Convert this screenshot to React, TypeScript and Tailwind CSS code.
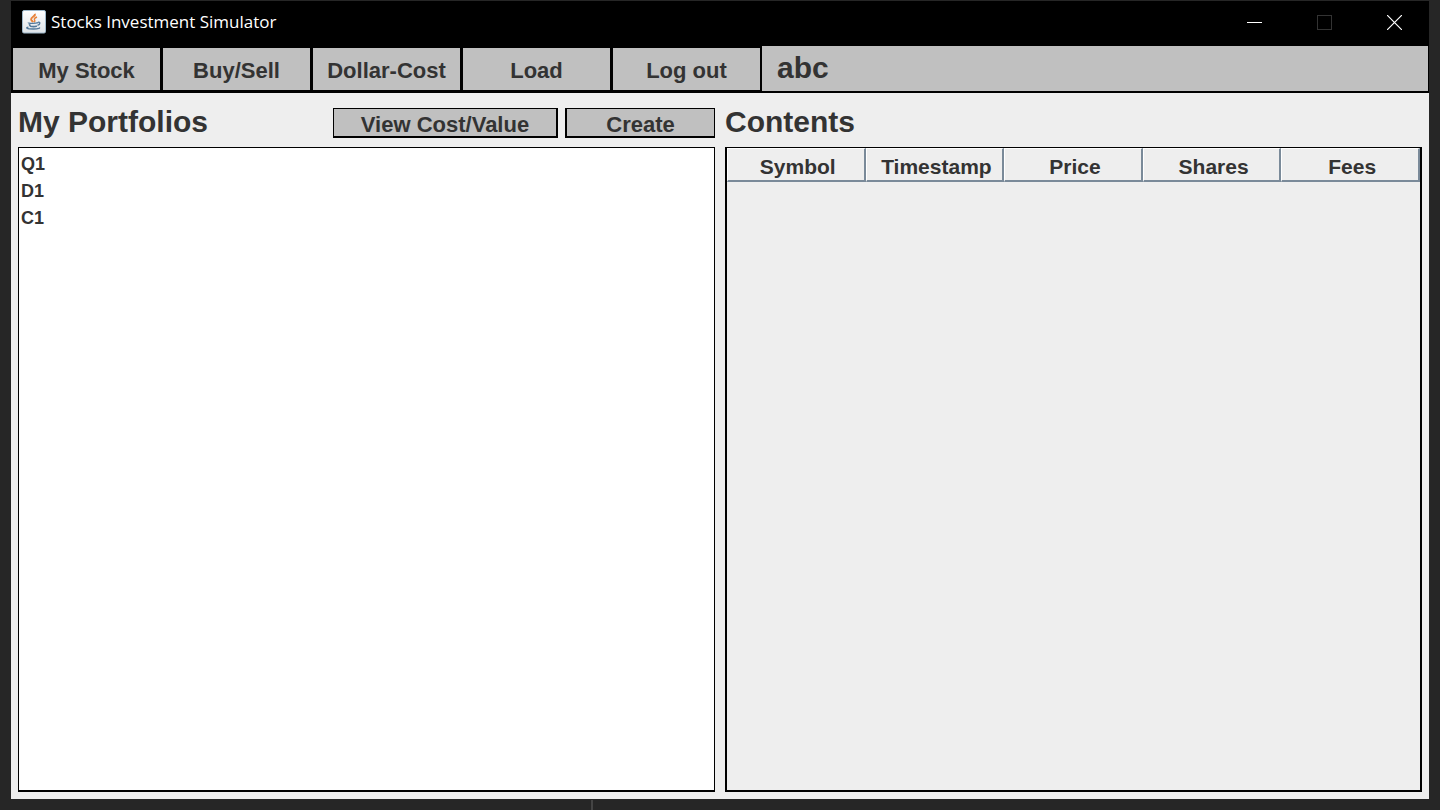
import React from "react";

const NAV_ITEMS = ["My Stock", "Buy/Sell", "Dollar-Cost", "Load", "Log out"];
const PORTFOLIOS = ["Q1", "D1", "C1"];
const COLUMNS = ["Symbol", "Timestamp", "Price", "Shares", "Fees"];

function JavaIcon() {
  return (
    <svg width="24" height="24" viewBox="0 0 24 24" aria-hidden="true">
      <defs>
        <linearGradient id="tile" x1="0" y1="0" x2="0" y2="1">
          <stop offset="0" stopColor="#ffffff" />
          <stop offset="1" stopColor="#dde2e7" />
        </linearGradient>
      </defs>
      <rect x="0.5" y="0.5" width="23" height="22.5" rx="1.5" fill="url(#tile)" stroke="#9fb9cb" />
      <path d="M13 3.8c.8 2.4-3.9 3.3-3.9 5.4 0 1.3 1.4 1.8 2 3" fill="none" stroke="#e8833a" strokeWidth="1.9" />
      <path d="M15 7c-2.6 1-3.1 2-2.4 3 .6.9.4 1.6-.5 2.3" fill="none" stroke="#e8833a" strokeWidth="1.4" />
      <path d="M6.5 12.5c-1 .9 6 1.2 9.8.2" fill="none" stroke="#52799b" strokeWidth="1.3" />
      <path d="M7.4 14.2c.2 1 .5 1.7 1.3 2 1.7.5 4.6.4 6.2-.2" fill="none" stroke="#52799b" strokeWidth="1.7" />
      <path d="M16 12.3c2.4-.6 2.7 2.2-.5 3.1" fill="none" stroke="#52799b" strokeWidth="1.3" />
      <path d="M6.4 17.200c-3 .3-2.300 1.800 4.900 1.800 5.700 0 6.900-.9 6-1.600" fill="none" stroke="#52799b" strokeWidth="1.3" />
    </svg>
  );
}

function TitleBar() {
  return (
    <header className="flex h-[45px] items-center bg-black pb-[3px] pl-[11px]">
      <JavaIcon />
      <span className="ml-[5px] flex-1 font-['Open_Sans','Noto_Sans',sans-serif] text-[17px] leading-6 text-white">
        Stocks Investment Simulator
      </span>
      <button type="button" aria-label="Minimize" className="flex h-full w-[70px] items-center justify-center">
        <svg width="15" height="15" viewBox="0 0 15 15">
          <path d="M0 7.5h15" stroke="#fff" />
        </svg>
      </button>
      <button type="button" aria-label="Maximize" disabled className="flex h-full w-[70px] items-center justify-center">
        <svg width="15" height="15" viewBox="0 0 15 15">
          <rect x="0.5" y="0.5" width="14" height="14" fill="none" stroke="#333" />
        </svg>
      </button>
      <button type="button" aria-label="Close" className="flex h-full w-[70px] items-center justify-center">
        <svg width="15" height="15" viewBox="0 0 15 15">
          <path d="M0 0l15 15M15 0L0 15" stroke="#fff" strokeWidth="1.2" />
        </svg>
      </button>
    </header>
  );
}

function Toolbar() {
  return (
    <nav className="flex h-[47px] border-x border-b-2 border-black bg-[#c0c0c0]">
      {NAV_ITEMS.map((label) => (
        <button
          key={label}
          type="button"
          className="w-[150px] border-t-2 border-r-2 border-b border-l border-black bg-[#c0c0c0] pt-1 text-[22px] leading-none font-bold whitespace-nowrap"
        >
          {label}
        </button>
      ))}
      <span className="pt-1 pl-[15px] text-[30px] leading-9 font-bold">abc</span>
    </nav>
  );
}

function PortfolioPanel() {
  return (
    <section className="flex flex-col">
      <div className="flex h-[54px] items-center">
        <h2 className="flex-1 pt-1 text-[30px] leading-9 font-bold">My Portfolios</h2>
        <button
          type="button"
          className="mt-1.5 mr-[7px] h-[30px] w-[225px] border-t border-r-2 border-b-2 border-l border-black bg-[#c0c0c0] pt-1 text-[22px] leading-none font-bold"
        >
          View Cost/Value
        </button>
        <button
          type="button"
          className="mt-1.5 h-[30px] w-[150px] border-t border-r border-b-2 border-l-2 border-black bg-[#c0c0c0] pt-1 text-[22px] leading-none font-bold"
        >
          Create
        </button>
      </div>
      <ul className="flex-1 border border-b-2 border-black bg-white pt-0.5">
        {PORTFOLIOS.map((name) => (
          <li key={name} className="flex">
            <button type="button" className="h-[27px] w-full pl-0.5 text-left text-[18px] leading-none font-bold">
              {name}
            </button>
          </li>
        ))}
      </ul>
    </section>
  );
}

function ContentsPanel() {
  return (
    <section className="flex flex-col">
      <div className="flex h-[54px] items-center">
        <h2 className="pt-1 text-[30px] leading-9 font-bold">Contents</h2>
      </div>
      <div className="flex-1 border-x-2 border-t border-b-2 border-black">
        <table className="w-full table-fixed border-separate border-spacing-0">
          <thead>
            <tr>
              {COLUMNS.map((label) => (
                <th
                  key={label}
                  scope="col"
                  className="h-[34px] border-t border-r-2 border-b-2 border-l border-t-white border-r-[#7a8a99] border-b-[#7a8a99] border-l-white p-0 pt-1 pl-1 text-[21px] leading-none font-bold"
                >
                  {label}
                </th>
              ))}
            </tr>
          </thead>
        </table>
      </div>
    </section>
  );
}

export default function App() {
  return (
    <div className="flex min-h-screen flex-col bg-[#262626] px-[11px] pt-px font-['Liberation_Sans',Arial,sans-serif] text-[#333333]">
      <div className="flex flex-1 flex-col bg-[#eeeeee]">
        <TitleBar />
        <Toolbar />
        <main className="grid flex-1 grid-cols-2 gap-[10px] px-[7px] pb-[7px]">
          <PortfolioPanel />
          <ContentsPanel />
        </main>
      </div>
      <div className="flex h-[11px] pt-px pl-[580px]">
        <span className="w-0.5 bg-[#444444]" />
      </div>
    </div>
  );
}
